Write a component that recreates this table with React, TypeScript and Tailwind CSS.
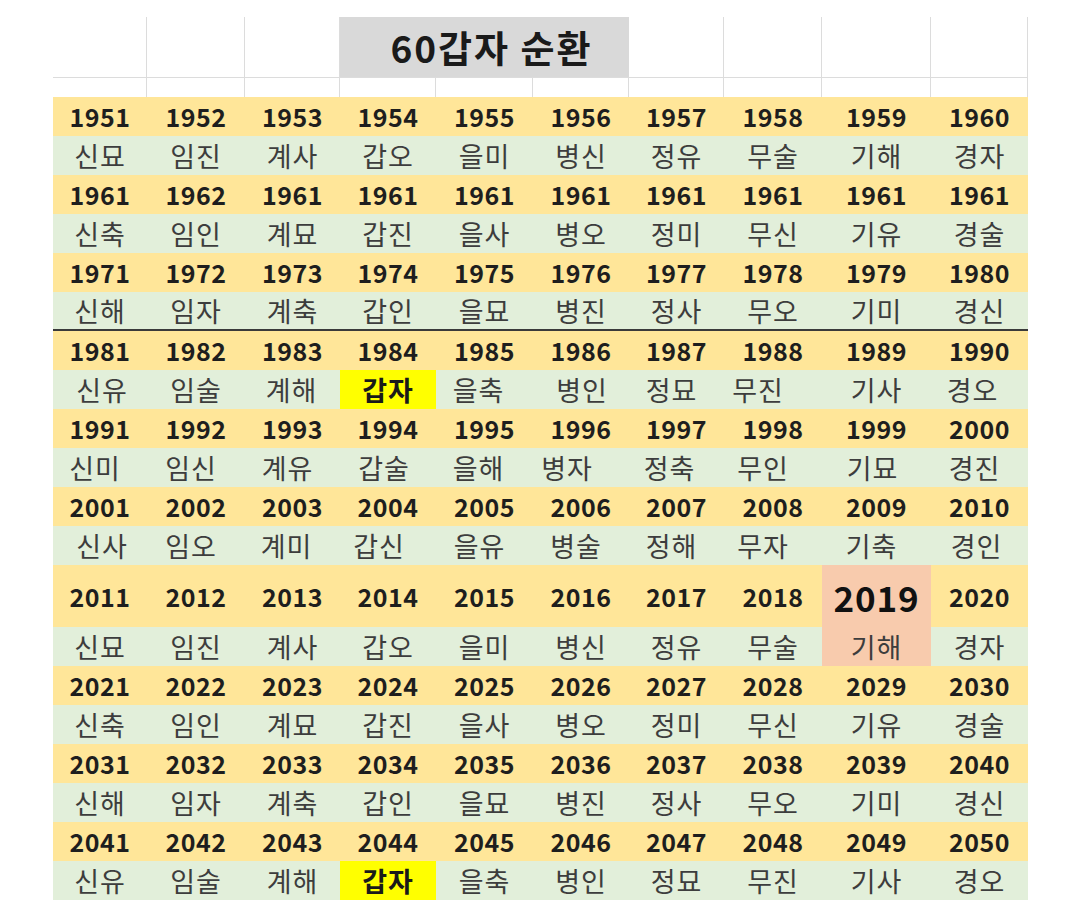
import React from "react";

const years: string[][] = [
  ["1951", "1952", "1953", "1954", "1955", "1956", "1957", "1958", "1959", "1960"],
  ["1961", "1962", "1961", "1961", "1961", "1961", "1961", "1961", "1961", "1961"],
  ["1971", "1972", "1973", "1974", "1975", "1976", "1977", "1978", "1979", "1980"],
  ["1981", "1982", "1983", "1984", "1985", "1986", "1987", "1988", "1989", "1990"],
  ["1991", "1992", "1993", "1994", "1995", "1996", "1997", "1998", "1999", "2000"],
  ["2001", "2002", "2003", "2004", "2005", "2006", "2007", "2008", "2009", "2010"],
  ["2011", "2012", "2013", "2014", "2015", "2016", "2017", "2018", "2019", "2020"],
  ["2021", "2022", "2023", "2024", "2025", "2026", "2027", "2028", "2029", "2030"],
  ["2031", "2032", "2033", "2034", "2035", "2036", "2037", "2038", "2039", "2040"],
  ["2041", "2042", "2043", "2044", "2045", "2046", "2047", "2048", "2049", "2050"],
];

const g0 = ["신묘", "임진", "계사", "갑오", "을미", "병신", "정유", "무술", "기해", "경자"];
const g1 = ["신축", "임인", "계묘", "갑진", "을사", "병오", "정미", "무신", "기유", "경술"];
const g2 = ["신해", "임자", "계축", "갑인", "을묘", "병진", "정사", "무오", "기미", "경신"];
const g3 = ["신유", "임술", "계해", "갑자", "을축", "병인", "정묘", "무진", "기사", "경오"];
const g4 = ["신미", "임신", "계유", "갑술", "을해", "병자", "정축", "무인", "기묘", "경진"];
const g5 = ["신사", "임오", "계미", "갑신", "을유", "병술", "정해", "무자", "기축", "경인"];

const gans: string[][] = [g0, g1, g2, g3, g4, g5, g0, g1, g2, g3];

const pads: Record<number, string[]> = {
  3: ["pl-[4px]", "", "pr-[2px]", "", "pr-[12px]", "pl-[2px]", "pr-[10px]", "pr-[30px]", "", "pr-[14px]"],
  4: ["pr-[10px]", "pr-[10px]", "pr-[10px]", "pr-[8px]", "pr-[12px]", "pr-[28px]", "pr-[14px]", "pr-[20px]", "pr-[8px]", "pr-[10px]"],
  5: ["pl-[4px]", "pr-[10px]", "pr-[12px]", "pr-[18px]", "pr-[10px]", "pr-[10px]", "pr-[10px]", "pr-[20px]", "pr-[10px]", "pr-[6px]"],
};

const cols = "grid grid-cols-[94px_98px_95px_96px_97px_96px_95px_98px_109px_97px]";

function YearRow({ r }: { r: number }) {
  const tall = r === 6;
  return (
    <div className={`${cols} ${tall ? "h-[62px]" : "h-[39px]"}`}>
      {years[r].map((y, c) => {
        const hot = r === 6 && c === 8;
        return (
          <div
            key={c}
            className={`flex items-center justify-center leading-none font-bold ${
              hot
                ? "bg-[#f8cbad] text-[35px] tracking-[0.8px] text-[#111111]"
                : "bg-[#ffe699] text-[25px] tracking-[0.5px] text-[#1e1e1e]"
            }`}
          >
            {y}
          </div>
        );
      })}
    </div>
  );
}

function GanRow({ r }: { r: number }) {
  const divider = r === 2;
  return (
    <div className={`${cols} h-[39px] ${divider ? "border-b-2 border-[#3a3a3a]" : ""}`}>
      {gans[r].map((g, c) => {
        const yellow = (r === 3 || r === 9) && c === 3;
        const hot = r === 6 && c === 8;
        const pad = pads[r] ? pads[r][c] : "";
        let cls = "bg-[#e2efda] text-[#3d3d3d]";
        if (yellow) cls = "bg-[#ffff00] text-[#1a1a1a] font-bold";
        if (hot) cls = "bg-[#f8cbad] text-[#3d3d3d]";
        return (
          <div
            key={c}
            className={`flex items-center justify-center leading-none text-[27px] tracking-[1px] ${cls} ${pad}`}
          >
            {g}
          </div>
        );
      })}
    </div>
  );
}

export default function App() {
  return (
    <div className="min-h-[919px] w-[1080px] bg-white font-['Noto_Sans_CJK_KR','Noto_Sans',sans-serif]">
      <div className="pt-[17px] pl-[53px]">
        <div className="w-[975px]">
          {/* header row */}
          <div className={`${cols} h-[61px] border-b border-[#dcdcdc]`}>
            <div className="border-r border-[#dcdcdc]" />
            <div className="border-r border-[#dcdcdc]" />
            <div className="border-r border-[#dcdcdc]" />
            <div className="col-span-3 flex items-center justify-center bg-[#d9d9d9] pl-[14px] text-[37px] font-bold leading-none tracking-[2px] text-[#1a1a1a]">
              60갑자 순환
            </div>
            <div className="border-r border-[#dcdcdc]" />
            <div className="border-r border-[#dcdcdc]" />
            <div className="border-r border-[#dcdcdc]" />
            <div className="border-r border-[#dcdcdc]" />
          </div>
          {/* blank row */}
          <div className={`${cols} h-[19px]`}>
            {Array.from({ length: 10 }).map((_, i) => (
              <div key={i} className="border-r border-[#dcdcdc]" />
            ))}
          </div>
          {/* data */}
          {years.map((_, r) => (
            <React.Fragment key={r}>
              <YearRow r={r} />
              <GanRow r={r} />
            </React.Fragment>
          ))}
        </div>
      </div>
    </div>
  );
}
